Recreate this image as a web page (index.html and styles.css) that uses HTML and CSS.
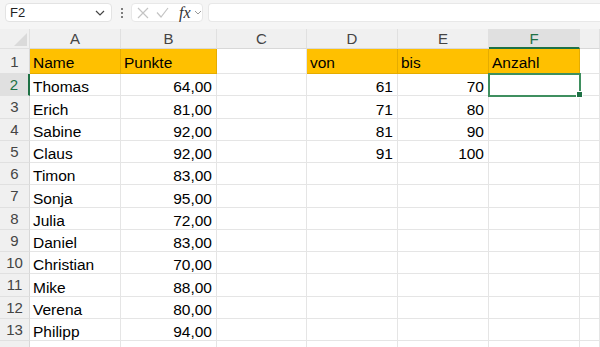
FILE: index.html
```html
<!DOCTYPE html>
<html lang="de">
<head>
    <meta charset="UTF-8">
    <title>Punkte</title>
    <link rel="stylesheet" href="styles.css">
</head>
<body>
    <div class="toolbar">
        <div class="name-box">
            <span>F2</span>
            <svg class="chev" width="10" height="6" viewBox="0 0 10 6"><path d="M1 1l4 4 4-4" fill="none" stroke="#444" stroke-width="1.2"/></svg>
        </div>
        <div class="dots"><i></i><i></i><i></i></div>
        <div class="fx-box">
            <svg width="12" height="12" viewBox="0 0 12 12"><path d="M1 1l10 10M11 1L1 11" stroke="#c4c4c4" stroke-width="1.2"/></svg>
            <svg width="13" height="11" viewBox="0 0 13 11"><path d="M1 5.5l4 4.5L12 1" fill="none" stroke="#c4c4c4" stroke-width="1.2"/></svg>
            <span class="fx">fx</span>
            <svg width="8" height="5" viewBox="0 0 8 5"><path d="M1 1l3 3 3-3" fill="none" stroke="#999" stroke-width="1"/></svg>
        </div>
        <div class="formula"></div>
    </div>

    <div class="sheet">
        <div class="corner"><span></span></div>
        <div class="col-head">A</div>
        <div class="col-head">B</div>
        <div class="col-head">C</div>
        <div class="col-head">D</div>
        <div class="col-head">E</div>
        <div class="col-head active">F</div>
        <div class="col-head"></div>

        <div class="row-head">1</div>
        <div class="cell hl">Name</div>
        <div class="cell hl">Punkte</div>
        <div class="cell"></div>
        <div class="cell hl">von</div>
        <div class="cell hl">bis</div>
        <div class="cell hl">Anzahl</div>
        <div class="cell"></div>
    </div>

    <script>
        var rows = [
            ['Thomas', '64,00', '61', '70'],
            ['Erich', '81,00', '71', '80'],
            ['Sabine', '92,00', '81', '90'],
            ['Claus', '92,00', '91', '100'],
            ['Timon', '83,00'],
            ['Sonja', '95,00'],
            ['Julia', '72,00'],
            ['Daniel', '83,00'],
            ['Christian', '70,00'],
            ['Mike', '88,00'],
            ['Verena', '80,00'],
            ['Philipp', '94,00'],
            []
        ];
        var sheet = document.querySelector('.sheet');
        rows.forEach(function (r, i) {
            var n = i + 2;
            var html = '<div class="row-head' + (n === 2 ? ' active' : '') + '">' + (n < 14 ? n : '') + '</div>';
            html += '<div class="cell">' + (r[0] || '') + '</div>';
            html += '<div class="cell num">' + (r[1] || '') + '</div>';
            html += '<div class="cell"></div>';
            html += '<div class="cell num">' + (r[2] || '') + '</div>';
            html += '<div class="cell num">' + (r[3] || '') + '</div>';
            html += '<div class="cell' + (n === 2 ? ' selected' : '') + '"></div>';
            html += '<div class="cell"></div>';
            sheet.insertAdjacentHTML('beforeend', html);
        });
    </script>
</body>
</html>
```

FILE: styles.css
```css
/* General Styles */
* {
    box-sizing: border-box;
}

body {
    margin: 0;
    font-family: 'Liberation Sans', Arial, sans-serif;
    background: #ffffff;
    color: #000;
    overflow: hidden;
}

/* Formula bar */
.toolbar {
    height: 29px;
    background: #f5f5f5;
    display: flex;
    align-items: flex-start;
    padding: 3px 0 0 5px;
}

.name-box {
    width: 107px;
    height: 19px;
    background: #fff;
    border: 1px solid #e3e3e3;
    border-radius: 4px;
    display: flex;
    align-items: center;
    justify-content: space-between;
    padding: 0 6px 0 4px;
    font-size: 13px;
    color: #222;
}

.dots {
    width: 19px;
    height: 19px;
    display: flex;
    flex-direction: column;
    align-items: center;
    justify-content: center;
    gap: 2px;
}

.dots i {
    width: 2px;
    height: 2px;
    background: #555;
    border-radius: 1px;
}

.fx-box {
    width: 72px;
    height: 19px;
    background: #fff;
    border: 1px solid #e8e8e8;
    border-radius: 4px;
    display: flex;
    align-items: center;
    gap: 7px;
    padding: 0 0 0 5px;
}

.fx {
    font-family: 'Liberation Serif', serif;
    font-style: italic;
    font-size: 16px;
    color: #333;
    margin-left: 3px;
    margin-right: -4px;
}

.formula {
    flex: 1;
    height: 19px;
    margin-left: 5px;
    background: #fff;
    border: 1px solid #e8e8e8;
    border-right: none;
    border-radius: 4px 0 0 4px;
}

/* Grid */
.sheet {
    display: grid;
    grid-template-columns: 30px 91px 96px 90px 91px 91px 91px 1fr;
    grid-template-rows: 20px 25px repeat(13, 22.25px);
}

.corner {
    background: #f0f0f0;
    border-right: 1px solid #e0e0e0;
    border-bottom: 1px solid #e0e0e0;
    position: relative;
}

.corner span {
    position: absolute;
    right: 2px;
    bottom: 2px;
    width: 0;
    height: 0;
    border-left: 13px solid transparent;
    border-bottom: 13px solid #dadada;
}

.col-head {
    background: #f0f0f0;
    border-right: 1px solid #e0e0e0;
    border-bottom: 1px solid #d8d8d8;
    text-align: center;
    font-size: 15px;
    line-height: 20px;
    color: #444;
}

.col-head.active {
    background: #e0e0e0;
    color: #1e7145;
    border-bottom: 2px solid #1e7145;
}

.row-head {
    background: #f0f0f0;
    border-right: 1px solid #d8d8d8;
    border-bottom: 1px solid #e0e0e0;
    text-align: center;
    font-size: 15px;
    color: #444;
    display: flex;
    align-items: center;
    justify-content: center;
}

.row-head.active {
    background: #e0e0e0;
    color: #1e7145;
    border-right: 2px solid #1e7145;
}

.cell {
    border-right: 1px solid rgba(0, 0, 0, 0.1);
    border-bottom: 1px solid rgba(0, 0, 0, 0.1);
    font-size: 15.5px;
    line-height: 17px;
    padding: 0 3px;
    display: flex;
    align-items: flex-end;
    white-space: nowrap;
}

.cell.num {
    justify-content: flex-end;
    padding-right: 4px;
}

.cell.hl {
    background: #ffc000;
    padding-bottom: 2px;
}

.cell.selected {
    outline: 2px solid #3f8f5f;
    outline-offset: -1px;
    position: relative;
}

.cell.selected::after {
    content: '';
    position: absolute;
    right: -4px;
    bottom: -3px;
    width: 5px;
    height: 5px;
    background: #1e7145;
    border: 1px solid #fff;
}
```
